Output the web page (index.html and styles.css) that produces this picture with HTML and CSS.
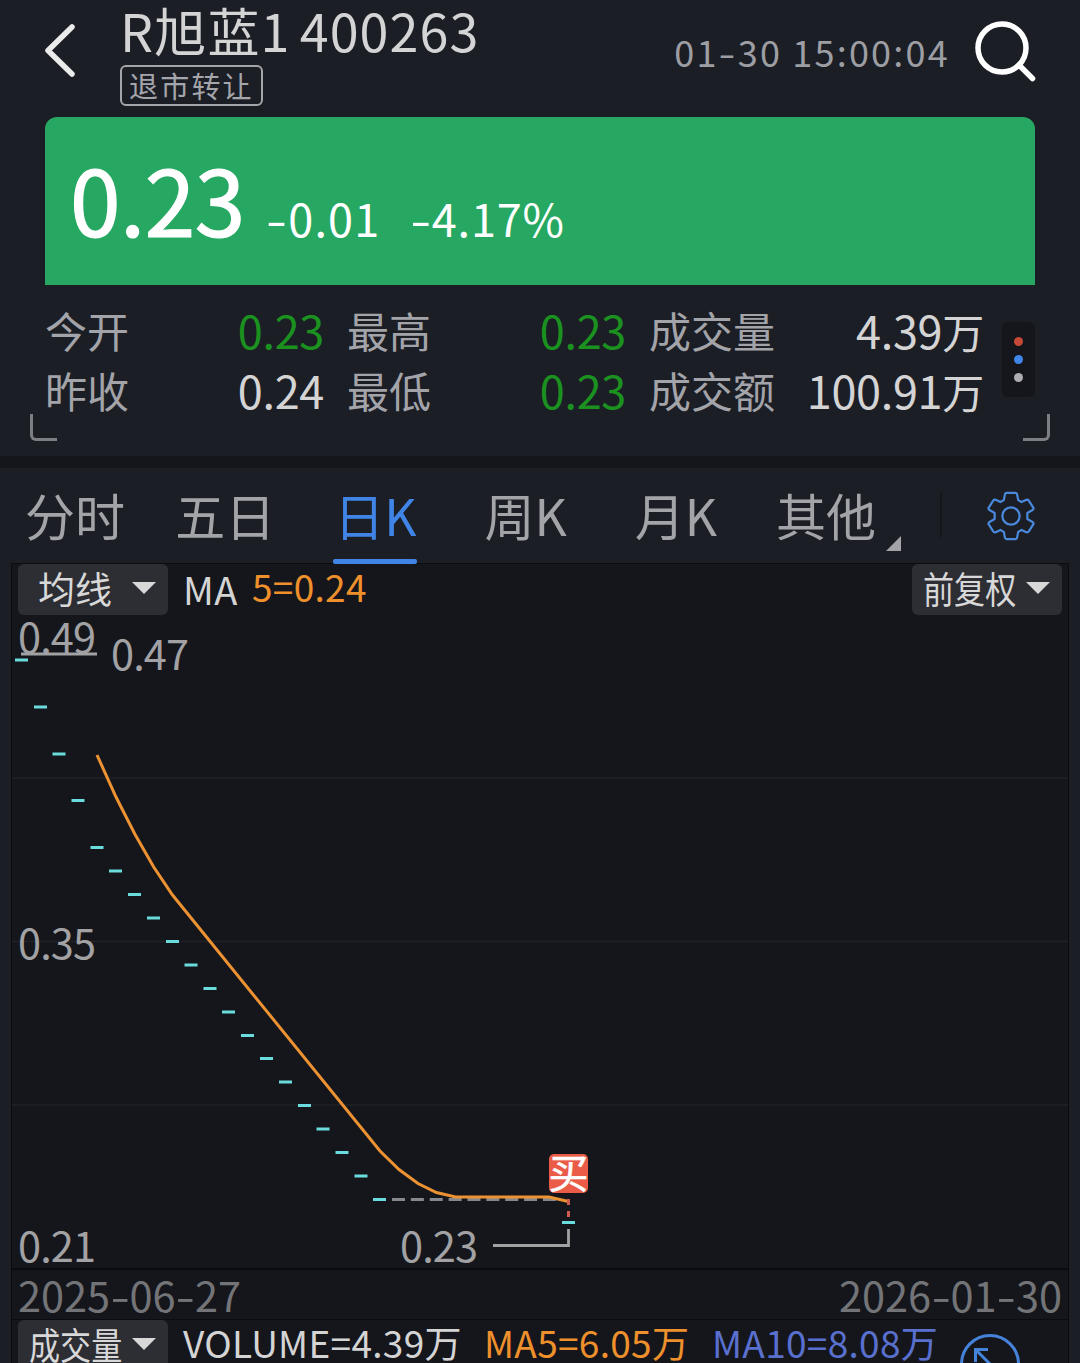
FILE: index.html
```html
<!DOCTYPE html>
<html lang="zh-CN">
<head>
    <meta charset="UTF-8">
    <title>R旭蓝1 400263</title>
    <link rel="stylesheet" href="styles.css">
</head>
<body>
    <header class="header">
        <svg class="back" width="34" height="58" viewBox="0 0 34 58">
            <path d="M29 5 L5 28.5 L29 52" fill="none" stroke="#ebebeb" stroke-width="5.5" stroke-linecap="round" stroke-linejoin="round"/>
        </svg>
        <div class="stock">
            <div class="stock-name">R旭蓝1<span class="stock-code">400263</span></div>
            <div class="stock-tag">退市转让</div>
        </div>
        <div class="time">01<span class="dash">-</span>30 15:00:04</div>
        <svg class="search" width="64" height="64" viewBox="0 0 64 64">
            <circle cx="29" cy="29" r="24" fill="none" stroke="#fff" stroke-width="5.5"/>
            <path d="M46 46 L59.5 59.5" stroke="#fff" stroke-width="5.5" stroke-linecap="round"/>
        </svg>
    </header>

    <section class="quote">
        <div class="price-card">
            <span class="price">0.23</span>
            <span class="change"><span class="dash">-</span>0.01</span>
            <span class="percent"><span class="dash">-</span>4.17%</span>
        </div>
        <div class="stats">
            <span class="label">今开</span><span class="value down">0.23</span>
            <span class="label next">最高</span><span class="value down">0.23</span>
            <span class="label next">成交量</span><span class="value">4.39<small>万</small></span>
            <span class="label">昨收</span><span class="value">0.24</span>
            <span class="label next">最低</span><span class="value down">0.23</span>
            <span class="label next">成交额</span><span class="value">100.91<small>万</small></span>
        </div>
        <div class="more">
            <i class="dot red"></i>
            <i class="dot blue"></i>
            <i class="dot gray"></i>
        </div>
        <i class="corner left"></i>
        <i class="corner right"></i>
    </section>

    <nav class="tabs">
        <a class="tab">分时</a>
        <a class="tab">五日</a>
        <a class="tab active">日K</a>
        <a class="tab">周K</a>
        <a class="tab">月K</a>
        <a class="tab other">其他</a>
        <span class="separator"></span>
        <svg class="gear" width="50" height="50" viewBox="-26 -26 52 52" fill="none" stroke="#4a88dc" stroke-width="2.3" stroke-linejoin="round">
            <path d="M-4.5 -24 H4.5 Q6 -24 6.3 -22.5 L7.5 -16.5 L11 -14.5 L16 -16.8 Q17.5 -17.3 18.5 -16 L23.3 -8.5 Q23.8 -7.3 22.8 -6.5 L17 -3.2 V3.2 L22.8 6.5 Q23.8 7.3 23.3 8.5 L18.5 16 Q17.5 17.3 16 16.8 L11 14.5 L7.5 16.5 L6.3 22.5 Q6 24 4.5 24 H-4.5 Q-6 24 -6.3 22.5 L-7.5 16.5 L-11 14.5 L-16 16.8 Q-17.5 17.3 -18.5 16 L-23.3 8.5 Q-23.8 7.3 -22.8 6.5 L-17 3.2 V-3.2 L-22.8 -6.5 Q-23.8 -7.3 -23.3 -8.5 L-18.5 -16 Q-17.5 -17.3 -16 -16.8 L-11 -14.5 L-7.5 -16.5 L-6.3 -22.5 Q-6 -24 -4.5 -24 Z"/>
            <circle r="9"/>
        </svg>
    </nav>

    <main class="chart">
        <div class="toolbar">
            <button class="select">均线</button>
            <span class="ma-title">MA</span>
            <span class="ma-value">5=0.24</span>
            <button class="select adjust"><span class="narrow">前复权</span></button>
        </div>

        <svg class="plot" width="1056" height="654" viewBox="12 614 1056 654">
            <!-- grid -->
            <path d="M12 778H1068M12 941.5H1068M12 1105H1068" stroke="#212227" stroke-width="1.5"/>

            <!-- axis labels -->
            <g class="axis">
                <text x="18" y="653">0.49</text>
                <text x="111" y="670">0.47</text>
                <text x="18" y="958.5">0.35</text>
                <text x="18" y="1262">0.21</text>
                <text x="400" y="1262">0.23</text>
            </g>
            <path d="M21 654H97M493 1245.5H568.5V1229" fill="none" stroke="#a2a2a4" stroke-width="2.8"/>

            <!-- daily bars -->
            <path d="M15 660h13M34 707h13M52.5 754h13M71.5 800.5h13M90.5 847.5h13M109 871h13M128 894.5h13M147 918h13M166 941.5h13M184.5 965h13M203.5 988.5h13M222 1012h13M241 1035.5h13M260 1058.5h13M279 1082h13M298 1105.5h13M316.5 1129h13M335.5 1152.5h13M354.5 1176h13M373 1199.5h13M562 1222.5h13" stroke="#6bdcdd" stroke-width="3"/>
            <path d="M392 1199.5H558" stroke="#85888f" stroke-width="3" stroke-dasharray="13 5.87"/>

            <!-- MA5 -->
            <polyline points="97,755 116,797 134.8,834 153.7,867 172.5,895 380,1151 399,1169.5 418,1183.5 436.5,1192.5 455.5,1197 549,1197 568.5,1201.5" fill="none" stroke="#ec9232" stroke-width="3"/>
            <path d="M568.5 1199v6M568.5 1211v6" stroke="#cf5b50" stroke-width="3"/>

            <rect x="549" y="1154" width="39" height="39" rx="5" fill="#ea5b48"/>
            <text class="buy" x="568.5" y="1188">买</text>
        </svg>

        <div class="dates">
            <span>2025<span class="dash">-</span>06<span class="dash">-</span>27</span>
            <span>2026<span class="dash">-</span>01<span class="dash">-</span>30</span>
        </div>

        <div class="volume">
            <button class="select"><span class="narrow">成交量</span></button>
            <span class="vol">VOLUME=4.39万</span>
            <span class="vol ma5">MA5=6.05万</span>
            <span class="vol ma10">MA10=8.08万</span>
            <svg class="expand" width="62" height="62" viewBox="0 0 62 62" fill="none" stroke="#4582d9" stroke-width="3">
                <circle cx="31" cy="31" r="28.5"/>
                <path d="M29 16.5H16.5V29M16.5 16.5L31 31"/>
            </svg>
        </div>
    </main>
</body>
</html>
```
FILE: styles.css
```css
* { box-sizing: border-box; }
body {
    margin: 0;
    height: 1363px;
    overflow: hidden;
    background: #1c1e26;
    color: #d4d4d5;
    font-family: "Noto Sans CJK SC", sans-serif;
    white-space: nowrap;
}
svg { display: block; flex: none; }
.dash { display: inline-block; transform: scaleX(1.35); margin: 0 0.06em; }

/* header */
.header { display: flex; height: 117px; padding: 0 43px; }
.back { margin-top: 22px; }
.stock { margin-left: 43px; width: 555px; }
.stock-name { height: 65px; line-height: 60px; font-size: 52px; letter-spacing: 1.2px; }
.stock-code { margin-left: 9px; letter-spacing: 1.1px; }
.stock-tag {
    width: 143px;
    height: 41px;
    border: 2px solid #a5a6ab;
    border-radius: 6px;
    color: #a5a6ab;
    font-size: 29px;
    line-height: 36px;
    letter-spacing: 2.2px;
    padding-left: 7px;
}
.time { width: 299px; line-height: 103px; font-size: 36px; letter-spacing: 2.2px; color: #9d9ea3; }
.search { margin-top: 19px; }

/* quote */
.quote { position: relative; height: 351px; border-bottom: 12px solid #15161b; }
.price-card {
    display: flex;
    align-items: baseline;
    height: 168px;
    margin: 0 45px;
    padding: 14px 0 0 25px;
    border-radius: 12px 12px 0 0;
    background: #27a862;
    color: #fff;
}
.price { width: 196px; font-size: 91px; line-height: 132px; letter-spacing: -0.5px; -webkit-text-stroke: 1.2px #fff; }
.change { width: 144px; font-size: 45px; letter-spacing: 1.2px; }
.percent { font-size: 45px; letter-spacing: 0.8px; }
.stats {
    display: grid;
    grid-template-columns: 120px 159px 143px 159px 160px 198px;
    grid-auto-rows: 60px;
    padding: 15px 0 0 45px;
    line-height: 60px;
}
.label { font-size: 42px; color: #a3a4a9; }
.next { padding-left: 23px; }
.value { font-size: 45px; text-align: right; letter-spacing: -0.3px; }
.value small { font-size: 42px; }
.down { color: #1b9120; }
.more {
    position: absolute;
    left: 1002px;
    top: 205px;
    width: 33px;
    height: 75px;
    border-radius: 6px;
    background: #15161b;
    display: flex;
    flex-direction: column;
    align-items: center;
    justify-content: center;
    gap: 9px;
}
.dot { width: 9px; height: 9px; border-radius: 50%; }
.red { background: #c64837; }
.blue { background: #3f86e8; }
.gray { background: #aeaeb2; }
.corner { position: absolute; top: 297px; width: 27px; height: 27px; border-bottom: 3px solid #7e7f85; }
.left { left: 30px; border-left: 3px solid #7e7f85; border-bottom-left-radius: 6px; }
.right { right: 30px; border-right: 3px solid #7e7f85; border-bottom-right-radius: 6px; }

/* tabs */
.tabs { display: flex; height: 96px; }
.tab { width: 150.2px; text-align: center; font-size: 50px; line-height: 92px; color: #a3a4a7; }
.active { color: #4084e6; }
.active::after { content: ""; display: block; width: 84px; height: 5px; margin: -1px auto 0; border-radius: 2px; background: #4084e6; }
.other { position: relative; }
.other::after {
    content: "";
    position: absolute;
    right: 0;
    top: 68px;
    border-left: 15px solid transparent;
    border-bottom: 15px solid #a3a4a7;
}
.separator { width: 2px; height: 46px; margin: 24px 0 0 39px; background: #15171d; }
.gear { margin: 23px 0 0 44px; }

/* chart */
.chart { margin: 0 12px; height: 799px; background: #15161b; box-shadow: 0 0 0 1px #0b0c11; }
.toolbar, .volume { display: flex; height: 50px; padding: 0 6px; }
.select {
    display: flex;
    justify-content: space-between;
    align-items: center;
    flex: none;
    width: 150px;
    height: 51px;
    padding: 0 12px 3px 20px;
    border: 0;
    border-radius: 6px;
    background: #2d2e33;
    color: #d8d8d9;
    font: 37px/48px "Noto Sans CJK SC", sans-serif;
}
.select::after { content: ""; border: 12px solid transparent; border-top-color: #d8d8d9; border-bottom: 0; }
.narrow { width: 92px; transform: scaleX(0.84); transform-origin: left; }
.adjust, .volume .select { padding-left: 11px; }
.adjust { margin-left: auto; }
.ma-title { margin-left: 15px; width: 69px; font-size: 38px; line-height: 49px; letter-spacing: 0.5px; }
.ma-value { font-size: 37px; line-height: 45px; letter-spacing: 0.3px; color: #ee902c; }
.axis { font-size: 41.5px; letter-spacing: -0.9px; fill: #a2a2a4; }
.buy { font-size: 40px; fill: #fff; stroke: #fff; stroke-width: 0.6px; text-anchor: middle; }
.dates {
    display: flex;
    justify-content: space-between;
    height: 51px;
    padding: 0 6px;
    border-top: 2px solid #0b0c11;
    font-size: 41.5px;
    line-height: 48px;
    color: #737478;
}
.volume { border-top: 1px solid #0b0c11; }
.vol { flex: none; width: 316px; padding-left: 15px; font-size: 37px; line-height: 44px; letter-spacing: 0.3px; }
.ma5 { width: 228px; color: #ee902c; padding-left: 0; }
.ma10 { width: 247px; color: #5970cf; padding-left: 0; }
.expand { margin-top: 13px; }
```
